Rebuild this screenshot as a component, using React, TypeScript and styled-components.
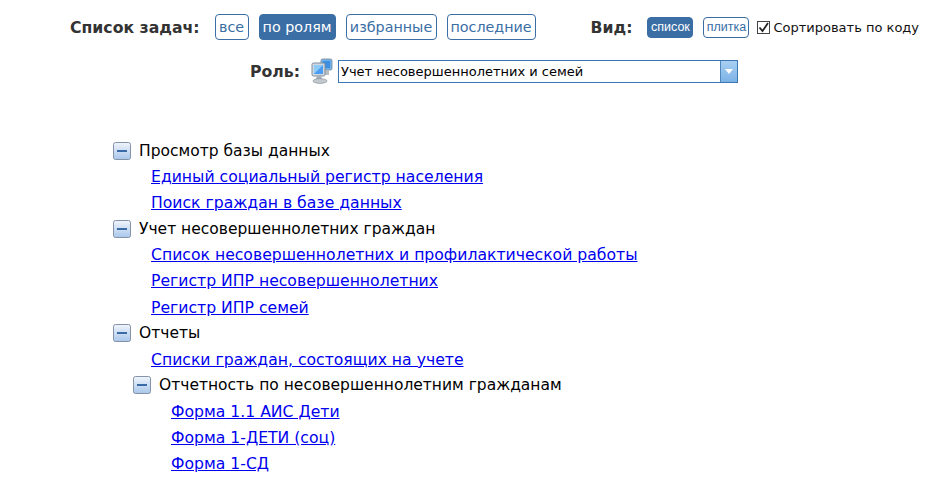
import React from 'react';
import styled, { createGlobalStyle } from 'styled-components';

const GlobalStyle = createGlobalStyle`
  html, body {
    margin: 0;
    padding: 0;
    background: #fff;
    font-family: "DejaVu Sans", Verdana, sans-serif;
    overflow: hidden;
  }
`;

const Page = styled.div`
  width: 945px;
  height: 493px;
  display: flex;
  flex-direction: column;
`;

const Toolbar = styled.div`
  display: flex;
  align-items: center;
  height: 26px;
  margin-top: 14px;
  padding-left: 70px;
`;

const Label = styled.span`
  font-size: 15.7px;
  font-weight: bold;
  color: #333;
  white-space: nowrap;
`;

const Chip = styled.span<{ $active?: boolean; $small?: boolean; $width: number }>`
  display: flex;
  align-items: center;
  justify-content: center;
  box-sizing: border-box;
  width: ${p => p.$width}px;
  height: ${p => (p.$small ? 21 : 26)}px;
  font-family: ${p => (p.$small ? '"Liberation Sans", Arial, sans-serif' : 'inherit')};
  font-size: ${p => (p.$small ? 12.5 : 14.3)}px;
  color: ${p => (p.$active ? '#fff' : '#3a6ea5')};
  background: ${p => (p.$active ? '#3a6ea5' : '#fff')};
  border: 1px solid #3a6ea5;
  border-radius: 4px;
  white-space: nowrap;
`;

const TaskChips = styled.div`
  display: flex;
  gap: 10px;
  margin-left: 15px;
`;

const ViewGroup = styled.div`
  display: flex;
  align-items: center;
  margin-left: 55px;
`;

const ViewChips = styled.div`
  display: flex;
  gap: 10px;
  margin-left: 15px;
`;

const SortLabel = styled.label`
  display: flex;
  align-items: center;
  margin-left: 8px;
  font-size: 13px;
  color: #111;
  white-space: nowrap;
`;

const CheckBox = styled.span`
  display: flex;
  width: 13px;
  height: 13px;
  box-sizing: border-box;
  border: 1px solid #444;
  margin-right: 3px;
  background: #fff;
`;

const RoleRow = styled.div`
  display: flex;
  align-items: center;
  height: 26px;
  margin-top: 18px;
  padding-left: 250px;
`;

const RoleIcon = styled.svg`
  width: 22px;
  height: 26px;
  margin-left: 11px;
  margin-right: 5px;
`;

const Select = styled.div`
  display: flex;
  align-items: center;
  justify-content: space-between;
  box-sizing: border-box;
  width: 400px;
  height: 23px;
  border: 1px solid #3a78b5;
  font-size: 13px;
  color: #000;
  padding-left: 2px;
`;

const SelectArrow = styled.span`
  display: flex;
  align-items: center;
  justify-content: center;
  width: 16px;
  height: 21px;
  background: linear-gradient(#a9d0f2, #7cb2e6);
  border-left: 1px solid #4f86bd;
`;

const Tree = styled.div`
  display: flex;
  flex-direction: column;
  margin-top: 53.5px;
  padding-left: 113px;
`;

const Row = styled.div<{ $indent: number }>`
  display: flex;
  align-items: center;
  height: 26.08px;
  padding-left: ${p => p.$indent}px;
  font-size: 15.65px;
  white-space: nowrap;
`;

const Caption = styled.span`
  color: #000;
  margin-left: 8px;
  font-size: 15.5px;
`;

const TreeLink = styled.a`
  color: #0000ee;
  text-decoration: underline;
`;

const Toggle = () => (
  <svg width="18" height="18" viewBox="0 0 18 18">
    <defs>
      <linearGradient id="tg" x1="0" y1="0" x2="0" y2="1">
        <stop offset="0" stopColor="#f0f5fc" />
        <stop offset="1" stopColor="#a9c6ea" />
      </linearGradient>
    </defs>
    <rect x="0.5" y="0.5" width="17" height="17" rx="2" fill="url(#tg)" stroke="#8493a8" />
    <rect x="4" y="8" width="10" height="2" fill="#3a6aa8" />
  </svg>
);

const Computers = () => (
  <RoleIcon viewBox="0 0 22 26">
    <rect x="10" y="1" width="11" height="11" rx="1.5" fill="#6bb0ec" stroke="#8c99a6" />
    <rect x="12" y="3" width="7" height="7" fill="#3f8fe0" />
    <path d="M13 12h5v5h-5z" fill="#b5bdc5" />
    <rect x="1" y="5" width="13" height="13" rx="1.5" fill="#cfd8e0" stroke="#7e8c9a" />
    <rect x="3" y="7" width="9" height="9" fill="#4a9df2" />
    <path d="M3 7h9L3 16z" fill="#8fcbf9" />
    <path d="M6 18h4l1 3H5z" fill="#a4aeb8" />
    <ellipse cx="9" cy="23" rx="7" ry="2.4" fill="#c3c9cf" stroke="#7f8993" strokeWidth="0.6" />
  </RoleIcon>
);

type Item = { text: string; level: number; link?: boolean };

const items: Item[] = [
  { text: 'Просмотр базы данных', level: 0 },
  { text: 'Единый социальный регистр населения', level: 0, link: true },
  { text: 'Поиск граждан в базе данных', level: 0, link: true },
  { text: 'Учет несовершеннолетних граждан', level: 0 },
  { text: 'Список несовершеннолетних и профилактической работы', level: 0, link: true },
  { text: 'Регистр ИПР несовершеннолетних', level: 0, link: true },
  { text: 'Регистр ИПР семей', level: 0, link: true },
  { text: 'Отчеты', level: 0 },
  { text: 'Списки граждан, состоящих на учете', level: 0, link: true },
  { text: 'Отчетность по несовершеннолетним гражданам', level: 1 },
  { text: 'Форма 1.1 АИС Дети', level: 1, link: true },
  { text: 'Форма 1-ДЕТИ (соц)', level: 1, link: true },
  { text: 'Форма 1-СД', level: 1, link: true },
];

export default function App() {
  return (
    <Page>
      <GlobalStyle />
      <Toolbar>
        <Label>Список задач:</Label>
        <TaskChips>
          <Chip $width={34}>все</Chip>
          <Chip $width={77} $active>по ролям</Chip>
          <Chip $width={91}>избранные</Chip>
          <Chip $width={89}>последние</Chip>
        </TaskChips>
        <ViewGroup>
          <Label>Вид:</Label>
          <ViewChips>
            <Chip $width={46} $small $active>список</Chip>
            <Chip $width={46} $small>плитка</Chip>
          </ViewChips>
          <SortLabel>
            <CheckBox>
              <svg width="11" height="11" viewBox="0 0 11 11">
                <path d="M1.5 5.5l3 3.5L10 1" fill="none" stroke="#222" strokeWidth="1.8" />
              </svg>
            </CheckBox>
            Сортировать по коду
          </SortLabel>
        </ViewGroup>
      </Toolbar>
      <RoleRow>
        <Label>Роль:</Label>
        <Computers />
        <Select>
          Учет несовершеннолетних и семей
          <SelectArrow>
            <svg width="8" height="5" viewBox="0 0 8 5">
              <path d="M0 0h8L4 5z" fill="#fff" />
            </svg>
          </SelectArrow>
        </Select>
      </RoleRow>
      <Tree>
        {items.map(item => (
          <Row key={item.text} $indent={item.link ? 38 + item.level * 20 : item.level * 20}>
            {item.link ? (
              <TreeLink href="#">{item.text}</TreeLink>
            ) : (
              <>
                <Toggle />
                <Caption>{item.text}</Caption>
              </>
            )}
          </Row>
        ))}
      </Tree>
    </Page>
  );
}
